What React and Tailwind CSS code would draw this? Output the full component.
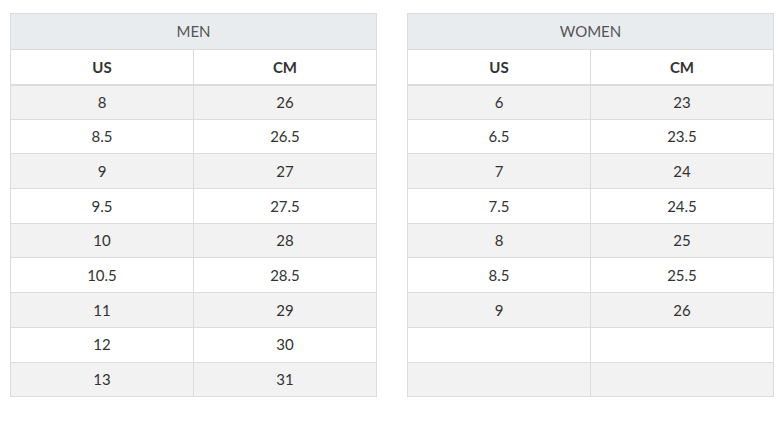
import React from 'react';

const men = [
  ['8', '26'], ['8.5', '26.5'], ['9', '27'], ['9.5', '27.5'], ['10', '28'],
  ['10.5', '28.5'], ['11', '29'], ['12', '30'], ['13', '31'],
];

const women = [
  ['6', '23'], ['6.5', '23.5'], ['7', '24'], ['7.5', '24.5'], ['8', '25'],
  ['8.5', '25.5'], ['9', '26'], ['', ''], ['', ''],
];

const SizeTable = ({ title, rows }) => (
  <table className="w-[367px] border-collapse text-[15px] text-[#333] text-center">
    <thead>
      <tr className="h-[36px] bg-[#e9ecef]">
        <th colSpan={2} className="border border-[#dcdcdc] font-normal text-[#555]">{title}</th>
      </tr>
      <tr className="h-[35px] bg-white">
        <th className="w-1/2 border border-[#dcdcdc] border-b-2 font-bold">US</th>
        <th className="w-1/2 border border-[#dcdcdc] border-b-2 font-bold">CM</th>
      </tr>
    </thead>
    <tbody>
      {rows.map((r, i) => (
        <tr key={i} className={i % 2 === 0 ? 'h-[34.7px] bg-[#f2f2f2]' : 'h-[34.7px] bg-white'}>
          <td className="border border-[#dcdcdc]">{r[0]}</td>
          <td className="border border-[#dcdcdc]">{r[1]}</td>
        </tr>
      ))}
    </tbody>
  </table>
);

export default function App() {
  return (
    <div className="w-[782px] h-[421px] bg-white pt-[13px] pl-[10px] font-['Lato',sans-serif]">
      <div className="flex items-start gap-[30px]">
        <SizeTable title="MEN" rows={men} />
        <SizeTable title="WOMEN" rows={women} />
      </div>
    </div>
  );
}
